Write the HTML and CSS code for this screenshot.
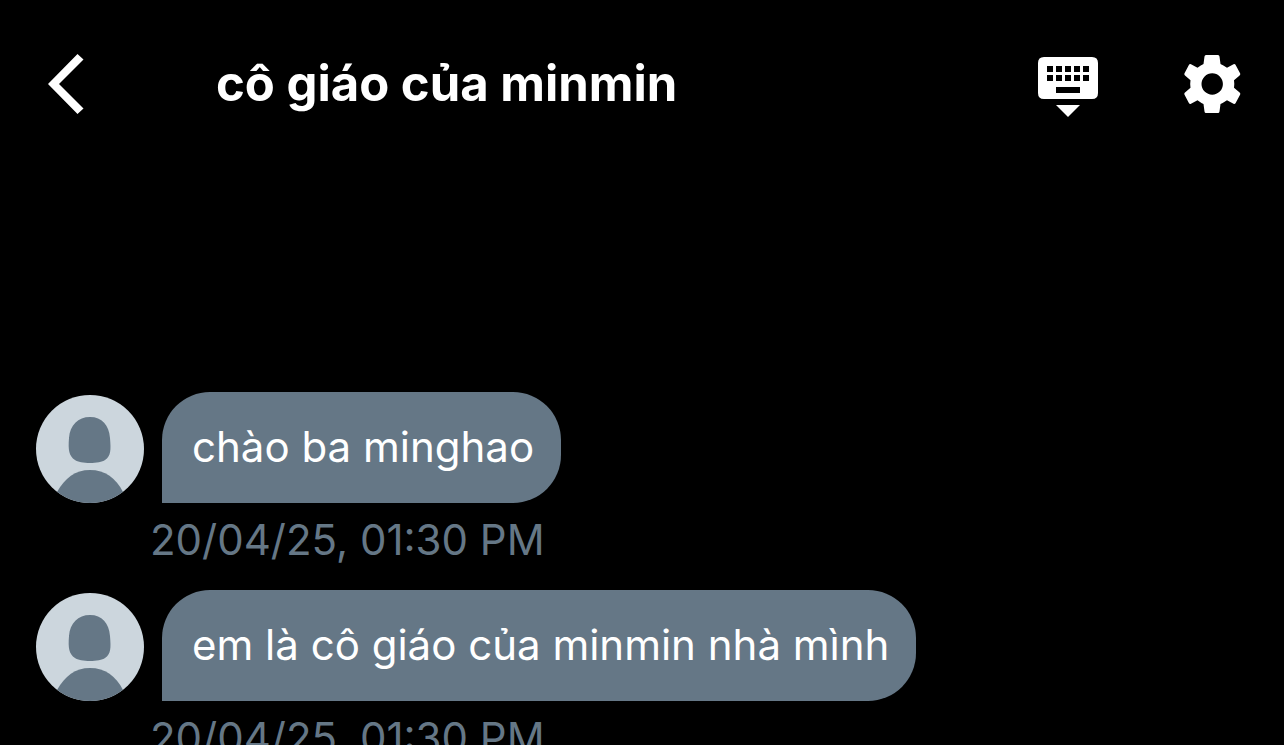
FILE: index.html
```html
<!DOCTYPE html>
<html lang="vi">
<head>
    <meta charset="UTF-8" />
    <meta name="viewport" content="width=device-width, initial-scale=1" />
    <title>cô giáo của minmin</title>
    <link rel="stylesheet" href="styles.css">
</head>
<body>
    <header class="chat-header">
        <button class="icon-btn back-btn" type="button" aria-label="Back">
            <svg width="36" height="60" viewBox="0 0 36 60">
                <path d="M29.5 0 L35.5 5.5 L11 30 L35.5 54.5 L29.5 60 L0 30 Z" />
            </svg>
        </button>
        <h1>cô giáo của minmin</h1>
        <button class="icon-btn" type="button" aria-label="Hide keyboard">
            <svg width="60" height="66" viewBox="0 -3 60 66">
                <path fill-rule="evenodd" d="M6 3 H54 Q60 3 60 9 V39 Q60 45 54 45 H6 Q0 45 0 39 V9 Q0 3 6 3 Z
                    M9 12 V18 H15 V12 Z M18 12 V18 H24 V12 Z M27 12 V18 H33 V12 Z M36 12 V18 H42 V12 Z M45 12 V18 H51 V12 Z
                    M9 21 V27 H15 V21 Z M18 21 V27 H24 V21 Z M27 21 V27 H33 V21 Z M36 21 V27 H42 V21 Z M45 21 V27 H51 V21 Z
                    M18 33 V39 H42 V33 Z" />
                <path d="M18 51 H42 L30 63 Z" />
            </svg>
        </button>
        <button class="icon-btn" type="button" aria-label="Settings">
            <svg width="57" height="58" viewBox="0 0 57 58">
                <path fill-rule="evenodd" d="M22 0 H34 Q35.3 0 35.5 1.5 L36.5 9 Q39 10 43 12.7 L49.5 9.2 Q50.8 8.6 51.5 9.8 L56.2 18.6 Q56.6 19.7 55.6 20.5 L50 25.2 Q50.6 29 50 32.8 L55.6 37.5 Q56.6 38.3 56.2 39.4 L51.5 48.2 Q50.8 49.4 49.5 48.8 L43 45.3 Q39 48 36.5 49 L35.5 56.5 Q35.3 58 34 58 H22 Q20.7 58 20.5 56.5 L19.5 49 Q17 48 13.5 45.3 L7 48.8 Q5.7 49.4 5 48.2 L0.4 39.4 Q0 38.3 1 37.5 L6.5 32.8 Q5.9 29 6.5 25.2 L1 20.5 Q0 19.7 0.4 18.6 L5 9.8 Q5.7 8.6 7 9.2 L13.5 12.7 Q17 10 19.5 9 L20.5 1.5 Q20.7 0 22 0 Z
                    M28.2 18.3 A10.7 10.7 0 1 0 28.2 39.7 A10.7 10.7 0 1 0 28.2 18.3 Z" />
            </svg>
        </button>
    </header>

    <!-- Messages -->
    <main class="messages">
        <article class="message">
            <svg class="avatar" viewBox="0 0 108 108" role="img" aria-label="Avatar">
                <path d="M54 22 C66 22 73 30 74 43 C75 55 75 61 69 65 C64 69 44 69 39 65 C33 61 32 55 33 43 C34 30 42 22 54 22 Z" />
                <path d="M21 97 C29 83 39 75 54 75 C69 75 80 83 87 97 L87 108 L21 108 Z" />
            </svg>
            <p class="bubble">chào ba minghao</p>
            <time class="sent-at">20/04/25, 01:30 PM</time>
        </article>
        <article class="message">
            <svg class="avatar" viewBox="0 0 108 108" role="img" aria-label="Avatar">
                <path d="M54 22 C66 22 73 30 74 43 C75 55 75 61 69 65 C64 69 44 69 39 65 C33 61 32 55 33 43 C34 30 42 22 54 22 Z" />
                <path d="M21 97 C29 83 39 75 54 75 C69 75 80 83 87 97 L87 108 L21 108 Z" />
            </svg>
            <p class="bubble">em là cô giáo của minmin nhà mình</p>
            <time class="sent-at">20/04/25, 01:30 PM</time>
        </article>
    </main>
</body>
</html>
```

FILE: styles.css
```css
body {
    margin: 0;
    height: 100vh;
    display: flex;
    flex-direction: column;
    overflow: hidden;
    background: #000;
    color: #fff;
    font-family: Inter, "Noto Sans", sans-serif;
}
.chat-header {
    display: flex;
    align-items: center;
    height: 168px;
    flex-shrink: 0;
    padding: 0 43px 0 48px;
}
.chat-header h1 {
    flex: 1;
    margin: 0;
    font-size: 49px;
    line-height: 60px;
    font-weight: 700;
}
.icon-btn {
    display: flex;
    padding: 0;
    border: none;
    background: none;
    color: inherit;
    cursor: pointer;
}
.icon-btn + .icon-btn {
    margin-left: 86px;
}
.back-btn {
    margin-right: 132px;
}
.icon-btn svg {
    fill: currentColor;
}
.messages {
    flex: 1;
    min-height: 0;
    overflow: hidden;
    padding: 224px 36px 0;
}
.message {
    display: grid;
    grid-template-columns: 108px 1fr;
    column-gap: 18px;
    align-items: end;
    justify-items: start;
}
.avatar {
    width: 108px;
    height: 108px;
    border-radius: 50%;
    background: #ccd6dd;
    fill: #657786;
}
.bubble {
    margin: 0;
    padding: 26px 27px 28px 30px;
    border-radius: 48px 48px 48px 0;
    background: #657786;
    font-size: 42px;
    line-height: 57px;
}
.sent-at {
    grid-column: 1 / -1;
    padding: 11px 0 25px 114px;
    color: #657786;
    font-size: 42px;
    line-height: 51px;
}
```
